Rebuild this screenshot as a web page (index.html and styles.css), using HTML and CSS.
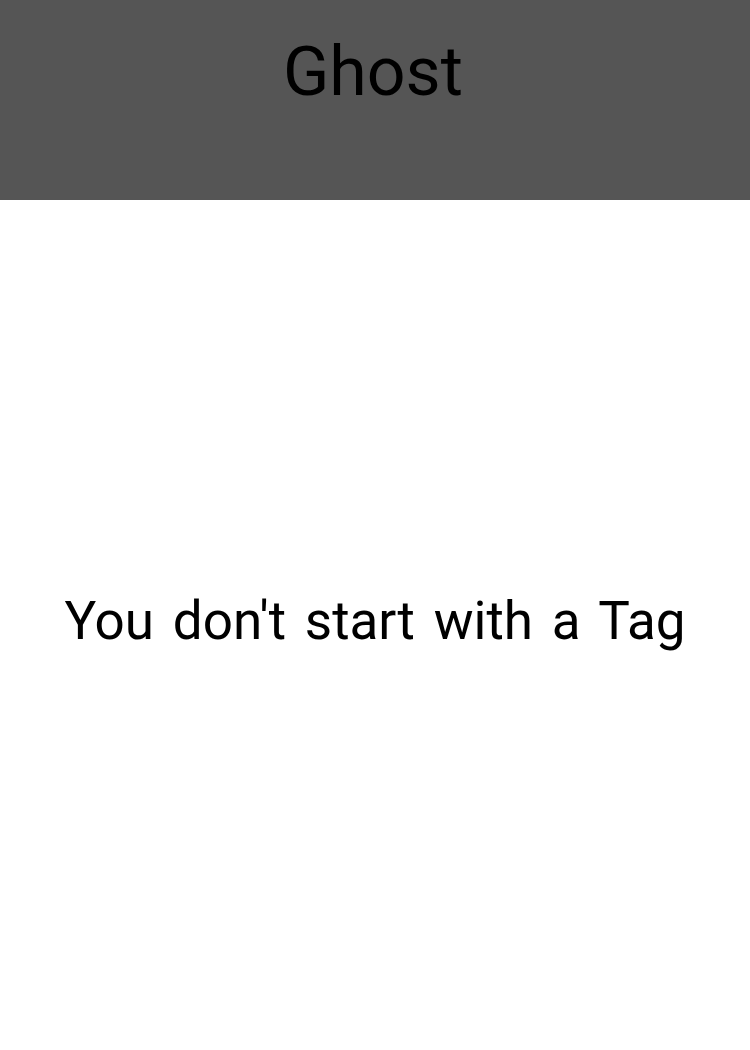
FILE: index.html
```html
<!DOCTYPE html>
<html>
<head>
<meta charset="utf-8">
<link rel="stylesheet" href="styles.css">
</head>
<body>
<header class="header"><h1 class="title">Ghost</h1></header>
<main class="content"><p class="message">You don't start with a Tag</p></main>
</body>
</html>
```

FILE: styles.css
```css
html, body {
  margin: 0;
  padding: 0;
  height: 100%;
  background: #ffffff;
  font-family: Roboto, "Noto Sans", sans-serif;
  color: #000;
}
body {
  display: flex;
  flex-direction: column;
}
.header {
  height: 200px;
  background: #555555;
  display: flex;
  justify-content: center;
}
.title {
  margin: 0;
  padding-top: 32px;
  padding-right: 4px;
  font-weight: 400;
  font-size: 68px;
  line-height: 80px;
}
.content {
  flex: 1;
  display: flex;
  align-items: center;
  justify-content: center;
  padding-bottom: 8px;
}
.message {
  margin: 0;
  font-size: 53px;
  line-height: 62px;
  word-spacing: 5.6px;
}
```
